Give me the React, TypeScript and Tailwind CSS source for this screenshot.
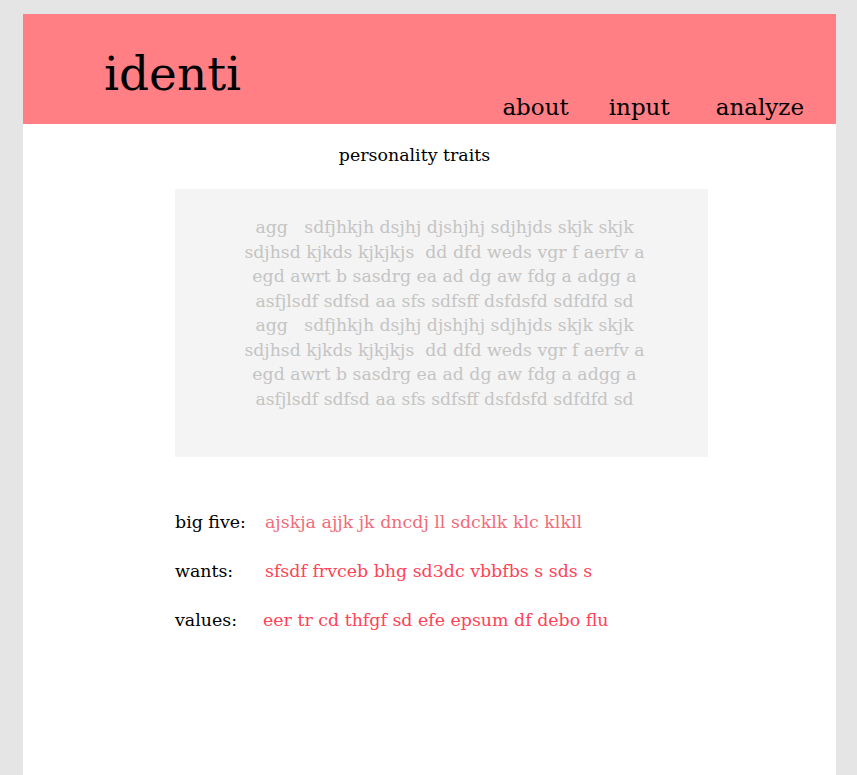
const box = [
  "agg \u00a0 sdfjhkjh dsjhj djshjhj sdjhjds skjk skjk",
  "sdjhsd kjkds kjkjkjs \u00a0dd dfd weds vgr f aerfv a",
  "egd awrt b sasdrg ea ad dg aw fdg a adgg a",
  "asfjlsdf sdfsd aa sfs sdfsff dsfdsfd sdfdfd sd",
  "agg \u00a0 sdfjhkjh dsjhj djshjhj sdjhjds skjk skjk",
  "sdjhsd kjkds kjkjkjs \u00a0dd dfd weds vgr f aerfv a",
  "egd awrt b sasdrg ea ad dg aw fdg a adgg a",
  "asfjlsdf sdfsd aa sfs sdfsff dsfdsfd sdfdfd sd",
];

const rows = [
  { label: "big five:", value: "ajskja ajjk jk dncdj ll sdcklk klc klkll", color: "text-[#f06c78]", pad: "pl-[90px]" },
  { label: "wants:", value: "sfsdf frvceb bhg sd3dc vbbfbs s sds s", color: "text-[#ff4255]", pad: "pl-[90px]" },
  { label: "values:", value: "eer tr cd thfgf sd efe epsum df debo flu", color: "text-[#ff4255]", pad: "pl-[88px]" },
];

export default function App() {
  return (
    <div className="min-h-screen bg-[#e5e5e5] pt-[14px] font-['DejaVu_Serif',serif]">
      <div className="ml-[23px] w-[813px] min-h-[761px] bg-white">
        <header className="h-[110px] bg-[#ff7f85] flex justify-between text-black">
          <div className="pl-[81px] pt-[30px] text-[47px] leading-[60px]">identi</div>
          <nav className="flex items-end pb-[2px] pr-[32px] text-[23px] leading-[30px]">
            <a className="mr-[40px]">about</a>
            <a className="mr-[46px]">input</a>
            <a>analyze</a>
          </nav>
        </header>
        <main className="pl-[152px] pt-[19px]">
          <div className="w-[533px]">
            <h1 className="pr-[54px] text-center text-[17.4px] leading-[24px] text-black">personality traits</h1>
            <div className="mt-[22px] h-[268px] bg-[#f4f4f4] pt-[26px] pl-[6px] text-center text-[17.3px] leading-[24.5px] text-[#c4c4c4]">
              {box.map((l, i) => (
                <div key={i}>{l}</div>
              ))}
            </div>
          </div>
          <div className="mt-[53px] flex flex-col gap-[25px] text-[17.4px] leading-[24px]">
            {rows.map((r) => (
              <div key={r.label} className="relative">
                <span className="absolute left-0 text-black">{r.label}</span>
                <span className={`${r.pad} ${r.color}`}>{r.value}</span>
              </div>
            ))}
          </div>
        </main>
      </div>
    </div>
  );
}
